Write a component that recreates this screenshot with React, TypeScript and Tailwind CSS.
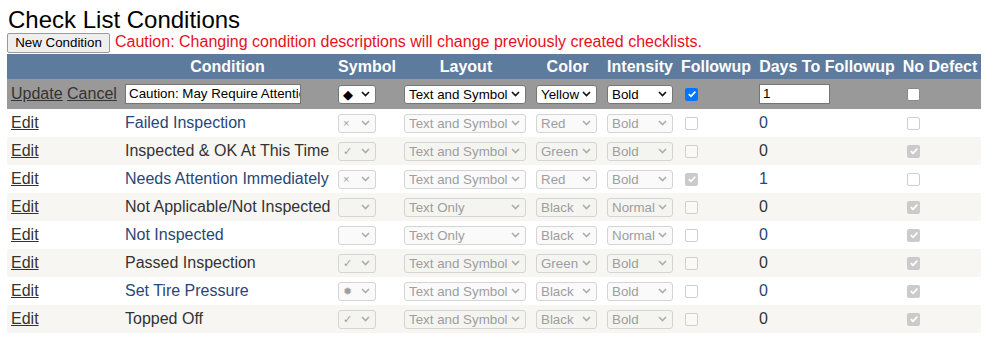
import React from 'react';

type Row = {
    name: string;
    sym: string;
    layout: string;
    color: string;
    intensity: string;
    followup: boolean;
    days: string;
    noDefect: boolean;
};

const rows: Row[] = [
    { name: 'Failed Inspection', sym: '×', layout: 'Text and Symbol', color: 'Red', intensity: 'Bold', followup: false, days: '0', noDefect: false },
    { name: 'Inspected & OK At This Time', sym: '✓', layout: 'Text and Symbol', color: 'Green', intensity: 'Bold', followup: false, days: '0', noDefect: true },
    { name: 'Needs Attention Immediately', sym: '×', layout: 'Text and Symbol', color: 'Red', intensity: 'Bold', followup: true, days: '1', noDefect: false },
    { name: 'Not Applicable/Not Inspected', sym: '', layout: 'Text Only', color: 'Black', intensity: 'Normal', followup: false, days: '0', noDefect: true },
    { name: 'Not Inspected', sym: '', layout: 'Text Only', color: 'Black', intensity: 'Normal', followup: false, days: '0', noDefect: true },
    { name: 'Passed Inspection', sym: '✓', layout: 'Text and Symbol', color: 'Green', intensity: 'Bold', followup: false, days: '0', noDefect: true },
    { name: 'Set Tire Pressure', sym: '✹', layout: 'Text and Symbol', color: 'Black', intensity: 'Bold', followup: false, days: '0', noDefect: true },
    { name: 'Topped Off', sym: '✓', layout: 'Text and Symbol', color: 'Black', intensity: 'Bold', followup: false, days: '0', noDefect: true },
];

const Chevron = ({ disabled }: { disabled?: boolean }) => (
    <svg width="9" height="6" viewBox="0 0 9 6" className="shrink-0 ml-[2px] mr-[5px]">
        <path d="M1 1 L4.5 4.5 L8 1" fill="none" stroke={disabled ? '#adadad' : '#111'} strokeWidth="1.6" />
    </svg>
);

const Select = ({ value, width, disabled, small }: { value: string; width: string; disabled?: boolean; small?: boolean }) => (
    <div
        className={`${width} h-[19px] flex items-center rounded-[3px] border ${
            disabled ? 'border-[#d4d4d4] bg-[rgba(239,239,239,0.3)] text-[#9e9e9e]' : 'border-[#767676] bg-white text-black'
        }`}
    >
        <span className={`flex-1 overflow-hidden whitespace-nowrap ${small ? 'text-[11px] leading-[13px] pl-[4px]' : 'text-[13.33px] leading-[15px] pl-[4px]'}`}>
            {value}
        </span>
        <Chevron disabled={disabled} />
    </div>
);

const Check = ({ checked, disabled }: { checked: boolean; disabled?: boolean }) => {
    if (checked) {
        return (
            <div className={`ml-[4px] w-[13px] h-[13px] rounded-[2px] flex items-center justify-center ${disabled ? 'bg-[#cbcbcb]' : 'bg-[#0075ff]'}`}>
                <svg width="10" height="10" viewBox="0 0 10 10">
                    <path d="M1.8 5.2 L4 7.3 L8.3 2.6" fill="none" stroke="white" strokeWidth="1.7" />
                </svg>
            </div>
        );
    }
    return (
        <div
            className={`ml-[4px] w-[13px] h-[13px] rounded-[2px] border ${
                disabled ? 'border-[#cfcfcf] bg-[rgba(255,255,255,0.4)]' : 'border-[#8a8a8a] bg-white'
            }`}
        />
    );
};

const TextBox = ({ value, width }: { value: string; width: string }) => (
    <div className={`${width} h-[20px] border border-[#767676] bg-white px-[3px] overflow-hidden whitespace-nowrap text-[13.33px] leading-[18px] text-black`}>
        {value}
    </div>
);

export default function App() {
    const headers = ['', 'Condition', 'Symbol', 'Layout', 'Color', 'Intensity', 'Followup', 'Days To Followup', 'No Defect'];

    return (
        <div className="w-[993px] h-[345px] bg-white pl-[7px] font-['Liberation_Sans',Arial,sans-serif] text-black">
            <div className="pt-[6px] pl-[1px] text-[24px] leading-[27px]">Check List Conditions</div>
            <div className="h-[21px] flex items-start">
                <button className="w-[103px] h-[20px] rounded-[2px] border border-[#9a9a9a] bg-[#efefef] text-[13.33px] leading-[16px] text-black">
                    New Condition
                </button>
                <span className="ml-[5px] text-[16px] leading-[18px] text-[#e8101c]">
                    Caution: Changing condition descriptions will change previously created checklists.
                </span>
            </div>

            <table className="table-fixed border-collapse w-[974px] text-[16px]">
                <colgroup>
                    <col className="w-[114px]" />
                    <col className="w-[213px]" />
                    <col className="w-[66px]" />
                    <col className="w-[132px]" />
                    <col className="w-[71px]" />
                    <col className="w-[74px]" />
                    <col className="w-[78px]" />
                    <col className="w-[144px]" />
                    <col className="w-[82px]" />
                </colgroup>
                <thead>
                    <tr className="h-[25px] bg-[#5d7b9d] text-white">
                        {headers.map((h, i) => (
                            <th key={i} className="px-[2px] text-center font-bold leading-[18px] whitespace-nowrap">
                                {h}
                            </th>
                        ))}
                    </tr>
                </thead>
                <tbody>
                    <tr className="h-[30px] bg-[#999999] text-[#333333]">
                        <td className="pl-[4px] whitespace-nowrap">
                            <span className="underline">Update</span> <span className="underline">Cancel</span>
                        </td>
                        <td className="pl-[4px]">
                            <TextBox value="Caution: May Require Attention" width="w-[176px]" />
                        </td>
                        <td className="pl-[4px]">
                            <Select value="◆" width="w-[38px]" />
                        </td>
                        <td className="pl-[4px]">
                            <Select value="Text and Symbol" width="w-[122px]" />
                        </td>
                        <td className="pl-[4px]">
                            <Select value="Yellow" width="w-[61px]" />
                        </td>
                        <td className="pl-[4px]">
                            <Select value="Bold" width="w-[66px]" />
                        </td>
                        <td className="pl-[4px]">
                            <Check checked />
                        </td>
                        <td className="pl-[4px]">
                            <TextBox value="1" width="w-[71px]" />
                        </td>
                        <td className="pl-[4px]">
                            <Check checked={false} />
                        </td>
                    </tr>
                    {rows.map((r, i) => (
                        <tr key={r.name} className={`h-[28px] ${i % 2 === 0 ? 'bg-white text-[#284775]' : 'bg-[#f7f6f3] text-[#333333]'}`}>
                            <td className="pl-[4px] leading-[18px]">
                                <span className="underline text-[#333333]">Edit</span>
                            </td>
                            <td className="pl-[4px] leading-[18px] whitespace-nowrap">{r.name}</td>
                            <td className="pl-[4px]">
                                <Select value={r.sym} width="w-[38px]" disabled small />
                            </td>
                            <td className="pl-[4px]">
                                <Select value={r.layout} width="w-[122px]" disabled />
                            </td>
                            <td className="pl-[4px]">
                                <Select value={r.color} width="w-[61px]" disabled />
                            </td>
                            <td className="pl-[4px]">
                                <Select value={r.intensity} width="w-[66px]" disabled />
                            </td>
                            <td className="pl-[4px]">
                                <Check checked={r.followup} disabled />
                            </td>
                            <td className="pl-[4px] leading-[18px]">{r.days}</td>
                            <td className="pl-[4px]">
                                <Check checked={r.noDefect} disabled />
                            </td>
                        </tr>
                    ))}
                </tbody>
            </table>
        </div>
    );
}
